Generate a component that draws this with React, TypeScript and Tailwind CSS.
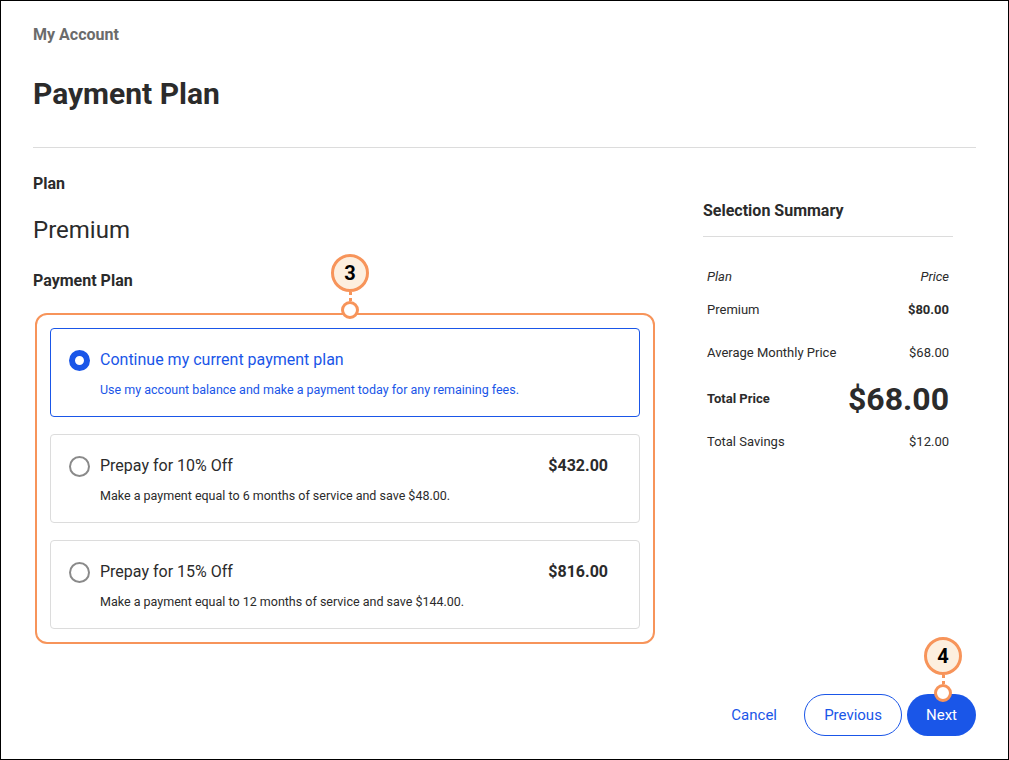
export default function App() {
  const font = { fontFamily: "Roboto, 'Liberation Sans', Arial, sans-serif" };
  const Marker = ({ n, className }: { n: string; className: string }) => (
    <div className={`absolute flex flex-col items-center ${className}`}>
      <div className="flex h-[38px] w-[38px] items-center justify-center rounded-full border-[3px] border-[#f7945a] bg-[#fdefdf] text-[20px] font-bold text-black">
        {n}
      </div>
      <div className="h-[9px] border-l-[3px] border-dotted border-[#f7945a]" />
      <div className="h-[18px] w-[18px] rounded-full border-[3px] border-[#f7945a] bg-white" />
    </div>
  );
  const Radio = ({ on }: { on?: boolean }) =>
    on ? (
      <span className="h-[21px] w-[21px] rounded-full border-[6px] border-[#1a56e8] bg-white" />
    ) : (
      <span className="h-[21px] w-[21px] rounded-full border-2 border-[#8a8a8a] bg-white" />
    );
  return (
    <div style={font} className="relative h-[760px] w-[1009px] border border-black bg-white text-[#2b2b2b]">
      <div className="px-[32px] pt-[22px]">
        <div className="text-[16px] font-bold text-[#6b6b6b]">My Account</div>
        <h1 className="mt-[24px] text-[30px] font-bold text-[#2b2b2b]">Payment Plan</h1>
        <div className="mt-[31px] border-t border-[#dcdcdc]" />
        <div className="flex">
          <div className="w-[622px]">
            <div className="mt-[24px] text-[16px] font-bold">Plan</div>
            <div className="mt-[16px] text-[24px]">Premium</div>
            <div className="mt-[21px] text-[16px] font-bold">Payment Plan</div>
            <div className="relative ml-[2px] mt-[20px] flex flex-col gap-[17px] rounded-[12px] border-2 border-[#f7945a] p-[13px]">
              <div className="h-[89px] rounded-[4px] border border-[#1a56e8] px-[18px] pt-[19px]">
                <div className="flex items-center gap-[10px]">
                  <Radio on />
                  <span className="text-[16px] text-[#1a56e8]">Continue my current payment plan</span>
                </div>
                <div className="mt-[9px] pl-[31px] text-[12.5px] text-[#1a56e8]">
                  Use my account balance and make a payment today for any remaining fees.
                </div>
              </div>
              {[
                ["Prepay for 10% Off", "$432.00", "Make a payment equal to 6 months of service and save $48.00."],
                ["Prepay for 15% Off", "$816.00", "Make a payment equal to 12 months of service and save $144.00."],
              ].map(([t, p, d]) => (
                <div key={t} className="h-[89px] rounded-[4px] border border-[#dcdcdc] pl-[18px] pr-[31px] pt-[19px]">
                  <div className="flex items-center gap-[10px]">
                    <Radio />
                    <span className="text-[16px]">{t}</span>
                    <span className="ml-auto text-[16px] font-bold">{p}</span>
                  </div>
                  <div className="mt-[9px] pl-[31px] text-[12.5px]">{d}</div>
                </div>
              ))}
            </div>
          </div>
          <div className="ml-[48px] w-[250px] pt-[51px]">
            <div className="text-[16px] font-bold">Selection Summary</div>
            <div className="mt-[13px] border-t border-[#dcdcdc]" />
            <div className="px-[4px] text-[13px]">
              <div className="mt-[30px] flex justify-between italic"><span>Plan</span><span>Price</span></div>
              <div className="mt-[13px] flex justify-between"><span>Premium</span><span className="font-bold">$80.00</span></div>
              <div className="mt-[24px] flex justify-between"><span>Average Monthly Price</span><span>$68.00</span></div>
              <div className="mt-[12px] flex items-center justify-between"><span className="font-bold">Total Price</span><span className="text-[32px] font-bold">$68.00</span></div>
              <div className="mt-[9px] flex justify-between"><span>Total Savings</span><span>$12.00</span></div>
            </div>
          </div>
        </div>
        <div className="mt-[50px] flex items-center justify-end">
          <button className="mr-[27px] text-[15px] text-[#1a56e8]">Cancel</button>
          <button className="h-[42px] w-[98px] rounded-full border border-[#1a56e8] text-[15px] text-[#1a56e8]">Previous</button>
          <button className="ml-[5px] h-[42px] w-[69px] rounded-full bg-[#1a56e8] text-[15px] text-white">Next</button>
        </div>
      </div>
      <Marker n="3" className="left-[330px] top-[253px]" />
      <Marker n="4" className="left-[923px] top-[636px]" />
    </div>
  );
}
